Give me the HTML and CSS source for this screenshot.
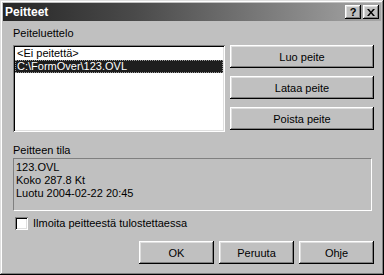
FILE: index.html
```html
<!DOCTYPE html>
<html lang="fi">
    <head>
        <meta charset="UTF-8" />
        <title>Peitteet</title>
        <link rel="stylesheet" href="styles.css">
    </head>
    <body>
        <div class="window">
            <div class="titlebar">
                <span class="title">Peitteet</span>
                <div class="title-buttons">
                    <button class="title-btn">?</button>
                    <button class="title-btn close-btn">
                        <svg width="8" height="7" viewBox="0 0 8 7">
                            <path d="M0 0h2l2 2.5L6 0h2L5 3.5 8 7H6L4 4.5 2 7H0l3-3.5z" fill="#000" />
                        </svg>
                    </button>
                </div>
            </div>

            <div class="dialog-body">
                <div class="label">Peiteluettelo</div>
                <div class="top-row">
                    <ul class="listbox">
                        <li>&lt;Ei peitettä&gt;</li>
                        <li class="selected">C:\FormOver\123.OVL</li>
                    </ul>
                    <div class="side-buttons">
                        <button class="win-btn">Luo peite</button>
                        <button class="win-btn">Lataa peite</button>
                        <button class="win-btn">Poista peite</button>
                    </div>
                </div>

                <div class="label status-label">Peitteen tila</div>
                <div class="status-box">
                    <div>123.OVL</div>
                    <div>Koko 287.8 Kt</div>
                    <div>Luotu 2004-02-22 20:45</div>
                </div>

                <label class="check-row">
                    <span class="checkbox"></span>
                    <span>Ilmoita peitteestä tulostettaessa</span>
                </label>

                <div class="footer">
                    <button class="win-btn footer-btn">OK</button>
                    <button class="win-btn footer-btn">Peruuta</button>
                    <button class="win-btn footer-btn">Ohje</button>
                </div>
            </div>
        </div>
    </body>
</html>
```

FILE: styles.css
```css
body {
    margin: 0;
    font-family: 'Liberation Sans', Arial, sans-serif;
    font-size: 11px;
    line-height: 13px;
    color: #000;
    background-color: #c0c0c0;
}
.window {
    width: 384px;
    height: 275px;
    box-sizing: border-box;
    padding: 3px;
    background-color: #c0c0c0;
    box-shadow: inset -1px -1px #000, inset 1px 1px #dfdfdf, inset -2px -2px #808080, inset 2px 2px #fff;
}
.titlebar {
    height: 18px;
    display: flex;
    align-items: center;
    justify-content: space-between;
    padding: 0 2px 0 2px;
    background: linear-gradient(to right, #262626, #4a4a4a 35%, #a6a6a6);
}
.title {
    color: #fff;
    font-weight: bold;
    font-size: 12px;
    padding-top: 1px;
}
.title-buttons {
    display: flex;
    gap: 2px;
}
.title-btn {
    width: 16px;
    height: 14px;
    padding: 0;
    border: none;
    background-color: #c0c0c0;
    font-family: 'Liberation Sans', Arial, sans-serif;
    font-weight: bold;
    font-size: 11px;
    line-height: 14px;
    display: flex;
    align-items: center;
    justify-content: center;
    box-shadow: inset -1px -1px #000, inset 1px 1px #fff, inset -2px -2px #808080, inset 2px 2px #dfdfdf;
}
.dialog-body {
    padding: 6px 7px 0 10px;
}
.label {
    height: 13px;
    margin-bottom: 5px;
}
.top-row {
    display: flex;
    gap: 5px;
}
.listbox {
    width: 212px;
    height: 87px;
    box-sizing: border-box;
    margin: 0;
    padding: 2px;
    list-style: none;
    background-color: #fff;
    box-shadow: inset 1px 1px #808080, inset -1px -1px #fff, inset 2px 2px #000, inset -2px -2px #dfdfdf;
}
.listbox li {
    height: 13px;
    padding-left: 2px;
    white-space: nowrap;
}
.listbox .selected {
    background-color: #1e1e1e;
    color: #fff;
    outline: 1px dotted #9a9a9a;
    outline-offset: -1px;
}
.side-buttons {
    display: flex;
    flex-direction: column;
    gap: 8px;
}
.win-btn {
    width: 144px;
    height: 23px;
    padding: 0;
    border: none;
    background-color: #c0c0c0;
    font-family: 'Liberation Sans', Arial, sans-serif;
    font-size: 11px;
    color: #000;
    box-shadow: inset -1px -1px #000, inset 1px 1px #fff, inset -2px -2px #808080, inset 2px 2px #dfdfdf;
}
.status-label {
    margin-top: 12px;
    margin-bottom: 1px;
}
.status-box {
    height: 53px;
    box-sizing: border-box;
    margin-right: 2px;
    padding: 2px 2px;
    border-top: 1px solid #808080;
    border-left: 1px solid #808080;
    border-bottom: 1px solid #fff;
    border-right: 1px solid #fff;
}
.check-row {
    display: flex;
    align-items: center;
    gap: 5px;
    margin-top: 6px;
    padding-left: 2px;
    height: 13px;
}
.checkbox {
    width: 13px;
    height: 13px;
    background-color: #fff;
    box-shadow: inset 1px 1px #808080, inset -1px -1px #fff, inset 2px 2px #000, inset -2px -2px #dfdfdf;
}
.footer {
    display: flex;
    justify-content: flex-end;
    gap: 5px;
    margin-top: 11px;
}
.footer-btn {
    width: 75px;
}
```
